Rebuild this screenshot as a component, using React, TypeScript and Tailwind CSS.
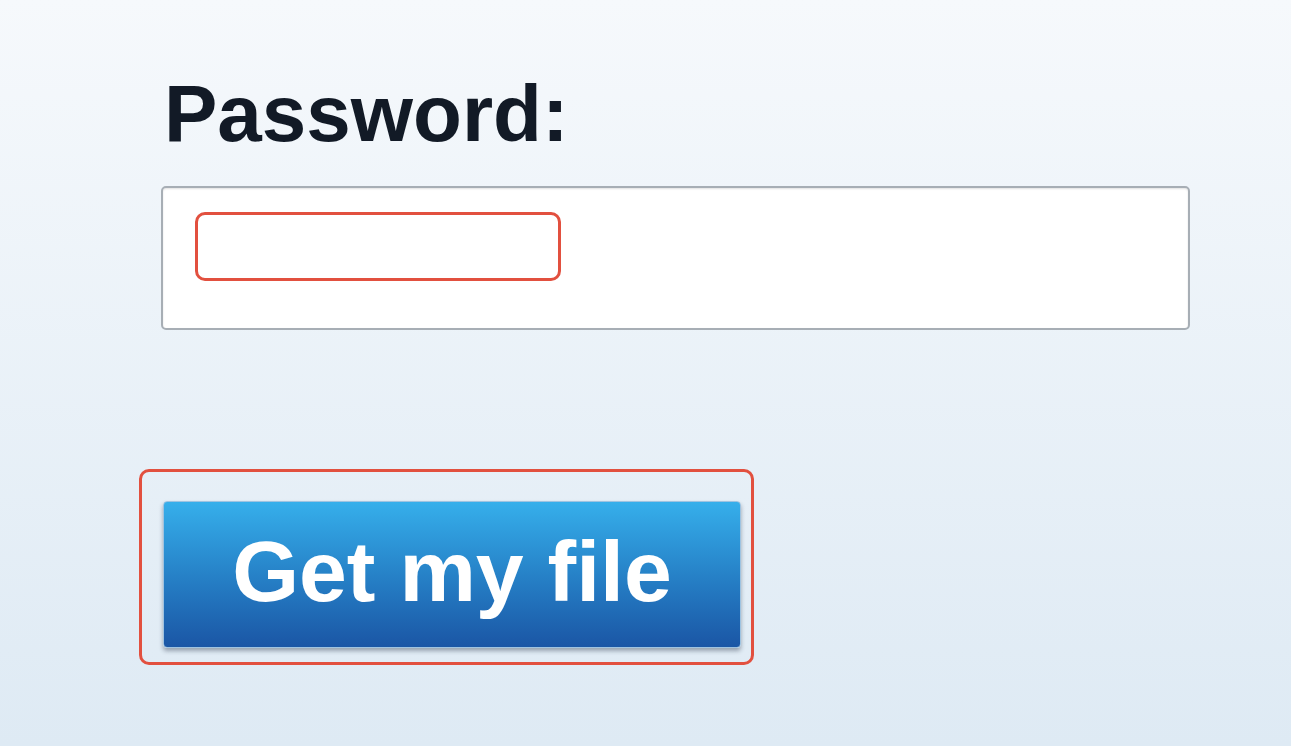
import React from "react";

export default function App() {
  return (
    <div
      className="w-full h-[746px] overflow-hidden bg-gradient-to-b from-[#f6f9fc] to-[#deeaf4] flex flex-col"
      style={{ fontFamily: '"Liberation Sans", Arial, sans-serif' }}
    >
      <label className="mt-[74px] ml-[164px] text-[80px] leading-[80px] font-bold text-[#121a26]">
        Password:
      </label>
      <div className="relative mt-[32px] ml-[161px] w-[1029px] h-[144px] bg-white border-2 border-[#a7aeb5] rounded-[5px] shadow-[inset_0_1px_2px_rgba(0,0,0,0.12)]">
        <div className="absolute left-[32px] top-[24px] w-[366px] h-[69px] border-[3px] border-[#e2503f] rounded-[10px]" />
      </div>
      <div className="mt-[139px] ml-[139px] w-[615px] h-[196px] border-[3px] border-[#e2503f] rounded-[10px] pl-[21px] pt-[29px]">
        <button className="w-[578px] h-[147px] rounded-[4px] border border-[#9fc3e0] bg-gradient-to-b from-[#36afeb] to-[#1b56a5] shadow-[0_3px_4px_rgba(60,70,90,0.45)] flex items-center justify-center pb-[7px] text-white text-[86px] leading-[86px] font-bold">
          Get my file
        </button>
      </div>
    </div>
  );
}
